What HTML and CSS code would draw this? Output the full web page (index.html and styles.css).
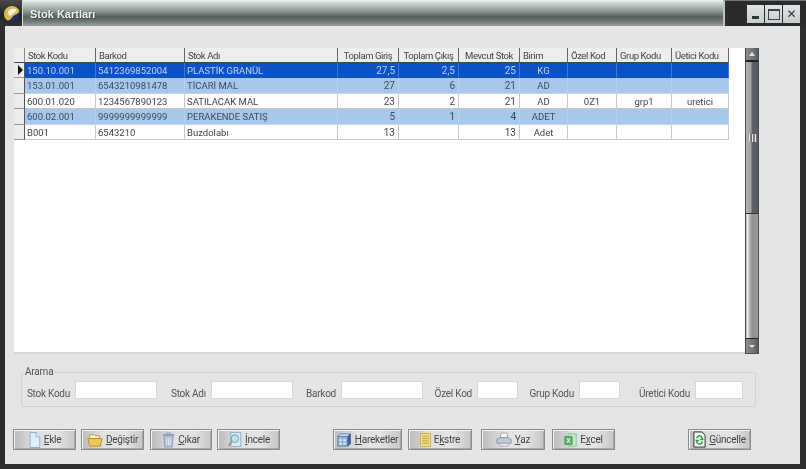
FILE: index.html
```html
<!DOCTYPE html>
<html lang="tr">
<head>
<meta charset="utf-8">
<title>Stok Kartları</title>
<link rel="stylesheet" href="styles.css">
</head>
<body>
<div class="window">
  <header class="titlebar">
    <div class="app-icon">
      <svg width="18" height="18" viewBox="0 0 18 18"><circle cx="9" cy="9" r="8" fill="#1d2f5c"/><path d="M1 9C1 4 5 1 9 1C12 1 15 2.500 16.500 6C15 10 11 9.500 9.500 12C8 14 6 16 4.500 15.500C2 14 1 11.500 1 9Z" fill="#dcb956"/><path d="M5 7C7 3.500 11 3 14 4.500C13 7 10 8 7.500 11C6 10.500 4.500 9 5 7Z" fill="#f8f0d4"/></svg>
    </div>
    <div class="title-strip"><span class="title-text">Stok Kartları</span></div>
    <div class="controls">
      <div class="ctl"><span class="glyph-min"></span></div>
      <div class="ctl"><span class="glyph-max"></span></div>
      <div class="ctl ctl-x">✕</div>
    </div>
  </header>

  <main class="client">
    <section class="grid-row">
      <div class="grid-white">
        <table class="grid">
          <colgroup>
            <col class="c-ind"><col class="c-kod"><col class="c-bar"><col class="c-adi"><col class="c-gir"><col class="c-cik"><col class="c-mev"><col class="c-bir"><col class="c-oze"><col class="c-gru"><col class="c-ure">
          </colgroup>
          <thead>
            <tr><th class="ind"></th><th>Stok Kodu</th><th>Barkod</th><th>Stok Adı</th><th class="ctr">Toplam Giriş</th><th class="ctr">Toplam Çıkış</th><th class="ctr">Mevcut Stok</th><th>Birim</th><th>Özel Kod</th><th>Grup Kodu</th><th>Üetici Kodu</th></tr>
          </thead>
          <tbody>
            <tr class="sel"><td class="ind"><span class="arrow"></span></td><td>150.10.001</td><td>5412369852004</td><td>PLASTİK GRANÜL</td><td class="num">27,5</td><td class="num">2,5</td><td class="num">25</td><td class="ctr">KG</td><td></td><td></td><td></td></tr>
            <tr class="alt"><td class="ind"></td><td>153.01.001</td><td>6543210981478</td><td>TİCARİ MAL</td><td class="num">27</td><td class="num">6</td><td class="num">21</td><td class="ctr">AD</td><td></td><td></td><td></td></tr>
            <tr><td class="ind"></td><td>600.01.020</td><td>1234567890123</td><td>SATILACAK MAL</td><td class="num">23</td><td class="num">2</td><td class="num">21</td><td class="ctr">AD</td><td class="ctr">0Z1</td><td class="ctr">grp1</td><td class="ctr">uretici</td></tr>
            <tr class="alt"><td class="ind"></td><td>600.02.001</td><td>9999999999999</td><td>PERAKENDE SATIŞ</td><td class="num">5</td><td class="num">1</td><td class="num">4</td><td class="ctr">ADET</td><td></td><td></td><td></td></tr>
            <tr><td class="ind"></td><td>B001</td><td>6543210</td><td>Buzdolabı</td><td class="num">13</td><td class="num"></td><td class="num">13</td><td class="ctr">Adet</td><td></td><td></td><td></td></tr>
          </tbody>
        </table>
      </div>
      <div class="scrollbar">
        <div class="sb-btn sb-up"><span class="tri-up"></span></div>
        <div class="sb-thumb"><span class="grip"></span></div>
        <div class="sb-track"></div>
        <div class="sb-btn sb-down"><span class="tri-down"></span></div>
      </div>
    </section>

    <fieldset class="search">
      <legend>Arama</legend>
      <div class="search-grid">
        <label>Stok Kodu</label><input type="text">
        <label>Stok Adı</label><input type="text">
        <label>Barkod</label><input type="text">
        <label>Özel Kod</label><input type="text">
        <label>Grup Kodu</label><input type="text">
        <label>Üretici Kodu</label><input type="text">
      </div>
    </fieldset>

    <nav class="buttons">
      <button class="btn b-ekle"><svg width="13" height="16" viewBox="0 0 16 17" preserveAspectRatio="none"><path d="M2.500 .5H10L14.500 5V16.500H2.500Z" fill="#dfeefc" stroke="#7fa6d0"/><path d="M10 .5V5H14.500" fill="#fff" stroke="#7fa6d0"/></svg><span><u>E</u>kle</span></button>
      <button class="btn b-deg"><svg width="16" height="15" viewBox="0 0 18 16" preserveAspectRatio="none"><path d="M3 5V3H8L9 4H14V7H3Z" fill="#fff6d0" stroke="#b89a3c"/><path d="M1 7H17L15 15H3Z" fill="#f2c94e" stroke="#b08c2c"/></svg><span><u>D</u>eğiştir</span></button>
      <button class="btn b-cik"><svg width="13" height="16" viewBox="0 0 14 17" preserveAspectRatio="none"><path d="M1 3H13" stroke="#8f9dbb" stroke-width="2"/><path d="M5 2V1H9V2" fill="none" stroke="#8f9dbb"/><path d="M2 4H12L11 16H3Z" fill="#b4bfd8" stroke="#8f9dbb"/><path d="M5 6V14M7 6V14M9 6V14" stroke="#e3e8f3"/></svg><span><u>Ç</u>ıkar</span></button>
      <button class="btn b-inc"><svg width="15" height="15" viewBox="0 0 18 17" preserveAspectRatio="none"><path d="M4.500 .5H16.500V16.500H4.500Z" fill="#dcebfa" stroke="#7fa6d0"/><circle cx="9.500" cy="7.500" r="4.500" fill="#bfe3ee" stroke="#5d93a8"/><path d="M6 11L2 15.500" stroke="#b08a68" stroke-width="2"/></svg><span><u>İ</u>ncele</span></button>

      <button class="btn b-har"><svg width="15" height="14" viewBox="0 0 19 16" preserveAspectRatio="none"><path d="M1 4H14V15H1Z" fill="#8fb2da" stroke="#5878a8"/><path d="M1 4L4 1H17L14 4Z" fill="#c9dcf2" stroke="#5878a8"/><path d="M14 4L17 1V12L14 15Z" fill="#3f5f92" stroke="#3f5f92"/><path d="M3 7H6V9H3ZM8 7H11V9H8ZM3 11H6V13H3ZM8 11H11V13H8Z" fill="#eaf2fb"/></svg><span><u>H</u>areketler</span></button>
      <button class="btn b-eks"><svg width="11" height="14" viewBox="0 0 13 15" preserveAspectRatio="none"><path d="M.5 .5H12.500V14.500H.5Z" fill="#f3e08a" stroke="#c8ad4c"/><path d="M2.500 3.500H10.500M2.500 6H10.500M2.500 8.500H10.500M2.500 11H10.500" stroke="#b89a3c"/></svg><span>E<u>k</u>stre</span></button>
      <button class="btn b-yaz"><svg width="16" height="15" viewBox="0 0 19 16" preserveAspectRatio="none"><path d="M6 1H13L14 6H5Z" fill="#f4f6f8" stroke="#9aa3ad"/><path d="M1 8L5 6H14L18 8V12H1Z" fill="#c3cbd3" stroke="#87919c"/><path d="M4 12H15L14 15H5Z" fill="#eef1f4" stroke="#9aa3ad"/></svg><span><u>Y</u>az</span></button>
      <button class="btn b-exc"><svg width="13" height="14" viewBox="0 0 16 16" preserveAspectRatio="none"><path d="M5 1H15V15H5Z" fill="#c9e8cb" stroke="#7fbe87"/><path d="M1 4H10V13H1Z" fill="#5cb06a" stroke="#3f9a52"/><path d="M3.500 6L7.500 11M7.500 6L3.500 11" stroke="#e9f7ea" stroke-width="1.300"/></svg><span>E<u>x</u>cel</span></button>

      <button class="btn b-gun"><svg width="13" height="17" viewBox="0 0 14 18" preserveAspectRatio="none"><path d="M1 1H9.500L13 4.500V17H1Z" fill="#f6fbf4" stroke="#222"/><path d="M4 8A3 3 0 0 1 9.500 6.500L10.500 9H7.500" fill="none" stroke="#2f9e48" stroke-width="1.500"/><path d="M10 11A3 3 0 0 1 4.500 12.500L3.500 10H6.500" fill="none" stroke="#2f9e48" stroke-width="1.500"/></svg><span><u>G</u>üncelle</span></button>
    </nav>
  </main>
</div>
</body>
</html>
```

FILE: styles.css
```css
* { box-sizing: border-box; }
html, body { margin: 0; padding: 0; }
body { background: #2f2f2f; font-family: Roboto, "Liberation Sans", sans-serif; }

.window {
  width: 806px;
  height: 469px;
  display: flex;
  flex-direction: column;
  background: #2e2e2e;
  overflow: hidden;
  filter: blur(0.35px);
}

/* title bar */
.titlebar { display: flex; height: 26px; flex: none; }
.app-icon {
  width: 23px;
  display: flex;
  align-items: center;
  justify-content: center;
  background: linear-gradient(#4a4a4a, #222 60%, #333);
  border-right: 1px solid #ddd;
  padding: 2px 0 0 1px;
}
.title-strip {
  flex: 1;
  display: flex;
  align-items: center;
  padding-left: 7px;
  background: linear-gradient(#dfe5e3 0, #c6cecc 12%, #8d9795 40%, #59625f 62%, #6c7674 80%, #98a1a0 100%);
  border-top: 1px solid #eee;
}
.title-text {
  color: #eef2f1;
  font: bold 11px "Liberation Sans", sans-serif;
  text-shadow: 1px 1px 1px #444;
}
.controls {
  width: 83px;
  display: flex;
  justify-content: flex-end;
  gap: 1px;
  padding: 4px 6px 3px 0;
  background: #2b2b2b;
  border-top: 1px solid #777;
  border-left: 2px solid #bcc5c3;
}
.ctl {
  width: 17px;
  height: 18px;
  display: flex;
  align-items: center;
  justify-content: center;
  background: linear-gradient(#e2e5e5, #c8cccc);
  color: #2d3540;
}
.glyph-min { width: 7px; height: 3px; background: #2d3540; margin-top: 6px; }
.glyph-max { width: 12px; height: 11px; border: 1px solid #3f4650; border-top-width: 2px; }
.ctl-x { font: bold 12px "DejaVu Sans", sans-serif; }

/* client area */
.client {
  flex: 1;
  margin: 0 6px 5px 5px;
  padding: 22px 0 0 9px;
  background: #e5e5e5;
  display: flex;
  flex-direction: column;
}

.grid-row { display: flex; height: 306px; flex: none; }
.grid-white { width: 731px; background: #fff; border-bottom: 2px solid #d6d6d6; }

.grid {
  table-layout: fixed;
  border-collapse: separate;
  border-spacing: 0;
  width: 715px;
  font-size: 9.500px;
  color: #444;
}
.c-ind { width: 11px; } .c-kod { width: 71px; } .c-bar { width: 89px; } .c-adi { width: 153px; }
.c-gir { width: 61px; } .c-cik { width: 60px; } .c-mev { width: 61px; } .c-bir { width: 48px; }
.c-oze { width: 49px; } .c-gru { width: 55px; } .c-ure { width: 57px; }

.grid th {
  height: 15px;
  padding: 0 0 0 3px;
  font-weight: 400;
  letter-spacing: -0.4px;
  text-align: left;
  background: #ededed;
  border-right: 1px solid #666;
  border-bottom: 1px solid #444;
  white-space: nowrap;
  overflow: hidden;
}
.grid th.ctr { text-align: center; padding: 0; }
.grid th.ind { padding: 0; border-right: 1px solid #888; }
.grid td {
  height: 15px;
  padding: 0 2px;
  border-right: 1px solid #c8c8c8;
  border-bottom: 1px solid #c8c8c8;
  white-space: nowrap;
  overflow: hidden;
}
.grid tbody tr:nth-child(even) td { height: 16px; }
.grid td.num { text-align: right; padding-right: 3px; font-size: 10px; }
.grid td.ctr { text-align: center; }
.grid td.ind {
  padding: 0 0 0 4px;
  background: #ececec;
  border-right: 1px solid #555;
  border-bottom: 1px solid #999;
}
.sel td { background: #0a52c6; color: #bcd4f6; border-right-color: #3c78d8; border-bottom-color: #0a52c6; }
.alt td { background: #a7c8ec; color: #3d4a5c; border-right-color: #b8d2ee; border-bottom-color: #c6d6e8; }
.arrow {
  display: block;
  width: 0;
  height: 0;
  border-left: 5px solid #111;
  border-top: 5px solid transparent;
  border-bottom: 5px solid transparent;
}

/* scrollbar */
.scrollbar {
  width: 14px;
  display: flex;
  flex-direction: column;
  border: 1px solid #4a4a4a;
  border-top: 0;
  background: #999;
}
.sb-btn {
  height: 15px;
  flex: none;
  display: flex;
  align-items: center;
  justify-content: center;
  background: linear-gradient(90deg, #8b8f94, #5b5f65);
}
.sb-up { height: 14px; border-bottom: 2px solid #222; }
.sb-down { border-top: 1px solid #222; }
.tri-up { width: 0; height: 0; border: 3px solid transparent; border-top: 0; border-bottom: 4px solid #e5e5e5; }
.tri-down { width: 0; height: 0; border: 3px solid transparent; border-bottom: 0; border-top: 3px solid #e5e5e5; }
.sb-thumb {
  height: 152px;
  flex: none;
  display: flex;
  align-items: center;
  background: linear-gradient(90deg, #b5b5b5 0, #9e9e9e 40%, #5c5f66 55%, #5a5c63 100%);
  border-bottom: 1px solid #333;
}
.grip {
  width: 8px;
  height: 8px;
  margin-left: 3px;
  background: repeating-linear-gradient(90deg, #e8e8e8 0 1px, #777 1px 3px);
}
.sb-track {
  flex: 1;
  background: linear-gradient(90deg, #aaa 0, #eee 12%, #c4c4c4 25%, #8f8f8f 50%, #9b9b9b 100%);
}

/* search */
.search {
  margin: 12px 0 0 7px;
  width: 735px;
  height: 41px;
  padding: 3px 0 0 4px;
  border: 1px solid #d2d2d2;
  border-radius: 2px;
  min-width: 0;
}
.search legend {
  padding: 0 1px;
  margin-left: -2px;
  font-size: 10px;
  letter-spacing: -0.2px;
  line-height: 12px;
  color: #555;
}
.search-grid {
  display: grid;
  grid-template-columns: 49px 82px 54px 82px 48px 82px 54px 41px 61px 41px 75px 48px;
  height: 18px;
  align-items: end;
}
.search-grid label {
  font-size: 10px;
  letter-spacing: -0.25px;
  line-height: 12px;
  margin-bottom: -1px;
  color: #555;
  text-align: right;
  padding-right: 5px;
  white-space: nowrap;
}
.search-grid input {
  width: 100%;
  height: 18px;
  padding: 0;
  border: 1px solid #d8d8d8;
  background: #fff;
}

/* buttons */
.buttons { display: flex; margin: 22px 0 0 -1px; height: 21px; }
.btn {
  height: 21px;
  padding: 0;
  display: flex;
  align-items: center;
  justify-content: center;
  gap: 3px;
  font-family: Roboto, "Liberation Sans", sans-serif;
  font-size: 10px;
  letter-spacing: -0.25px;
  color: #444;
  background: linear-gradient(90deg, #bcbcbc 0, #e0e0e0 35%, #e4e4e4 70%, #c6c6c6 100%);
  border: 1px solid #8b8b8b;
  box-shadow: inset 1px 1px 0 #f5f5f5, inset -1px -1px 0 #a8a8a8;
}
.btn svg { flex: none; }
.b-ekle { width: 63px; }
.b-deg { width: 63px; margin-left: 5px; }
.b-cik { width: 62px; margin-left: 6px; }
.b-inc { width: 63px; margin-left: 5px; }
.b-har { width: 69px; margin-left: 53px; }
.b-eks { width: 64px; margin-left: 6px; }
.b-yaz { width: 64px; margin-left: 9px; }
.b-exc { width: 63px; margin-left: 7px; }
.b-gun { width: 63px; margin-left: 73px; }
```
